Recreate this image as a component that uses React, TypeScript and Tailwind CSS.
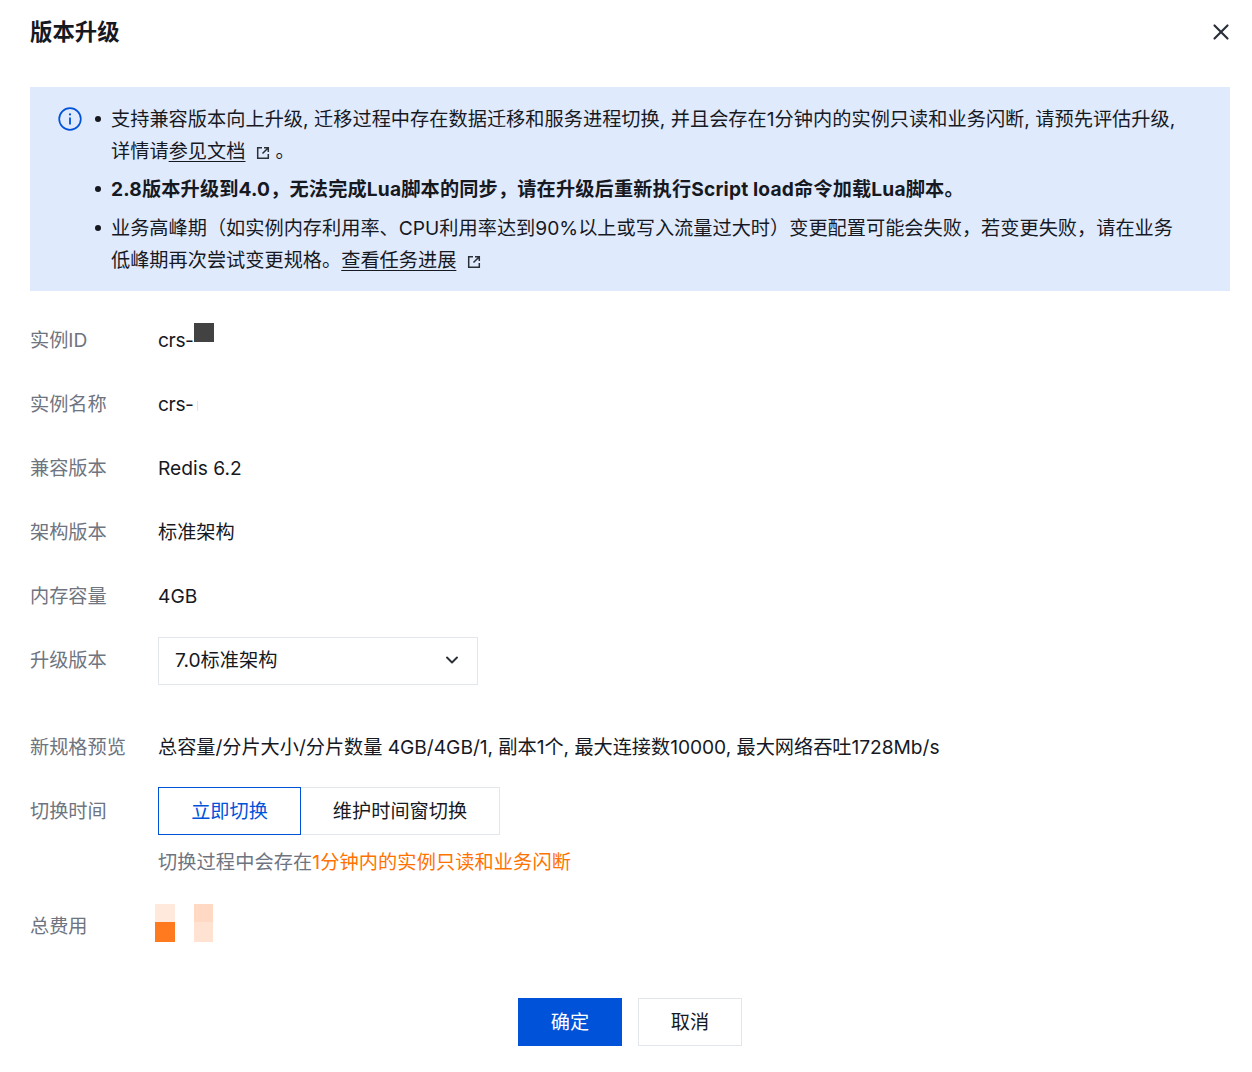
import { X, ChevronDown } from "lucide-react";

const font = "font-['Inter','Noto_Sans_CJK_SC',sans-serif]";

function ExternalIcon() {
  return (
    <svg width="16" height="16" viewBox="0 0 16 16" fill="none" className="inline-block align-[-3px] ml-[10px]" aria-hidden="true">
      <path d="M7 2.7H2.7v10.6h10.6V9" stroke="#2b3038" strokeWidth="1.5" />
      <path d="M9 2.7h4.3V7M13.3 2.7 7.5 8.5" stroke="#2b3038" strokeWidth="1.5" />
    </svg>
  );
}

function Bullet() {
  return (
    <span className="w-[17px] shrink-0 flex pt-[13px] pl-[1px]">
      <span className="w-[6px] h-[6px] rounded-full bg-[#16191f]" />
    </span>
  );
}

function Row({ label, className, children }: { label: string; className?: string; children: React.ReactNode }) {
  return (
    <div className={`flex items-center ${className ?? ""}`}>
      <div className="w-[128px] shrink-0 text-[#6e7480]">{label}</div>
      <div className="flex-1 min-w-0">{children}</div>
    </div>
  );
}

export default function App() {
  return (
    <div className={`${font} w-[1252px] h-[1072px] bg-white pl-[30px] pr-[22px] text-[19.2px] leading-[32px] text-[#16191f] overflow-hidden`}>
      <div className="flex items-center justify-between h-[32px] pt-0 mt-[16px]">
        <h1 className="text-[22.4px] font-bold">版本升级</h1>
        <X size={26} strokeWidth={2} className="text-[#2b3038] -mr-[4px]" aria-label="关闭" />
      </div>

      <div className="mt-[39px] bg-[#e0eafd] h-[204px] pl-[28px] pr-[40px] pt-[16px] flex items-start">
        <svg width="24" height="24" viewBox="0 0 24 24" fill="none" className="shrink-0 mt-[4px]" aria-hidden="true">
          <circle cx="12" cy="12" r="10.8" stroke="#0052d9" strokeWidth="1.7" />
          <circle cx="12" cy="7.4" r="1.1" fill="#0052d9" />
          <path d="M12 10.4v7.2" stroke="#0052d9" strokeWidth="1.8" />
        </svg>
        <ul className="ml-[12px] flex-1 flex flex-col">
          <li className="flex">
            <Bullet />
            <p className="tracking-[0.02px]">
              <span className="block whitespace-nowrap">支持兼容版本向上升级, 迁移过程中存在数据迁移和服务进程切换, 并且会存在1分钟内的实例只读和业务闪断, 请预先评估升级,</span>
              <span className="block whitespace-nowrap">
                详情请<a className="underline underline-offset-[3px]">参见文档</a>
                <ExternalIcon />
                <span className="ml-[4px]">。</span>
              </span>
            </p>
          </li>
          <li className="flex mt-[6px]">
            <Bullet />
            <p className="font-bold tracking-[0.15px]">2.8版本升级到4.0，无法完成Lua脚本的同步，请在升级后重新执行Script load命令加载Lua脚本。</p>
          </li>
          <li className="flex mt-[7px]">
            <Bullet />
            <p>
              <span className="block whitespace-nowrap">业务高峰期（如实例内存利用率、CPU利用率达到90%以上或写入流量过大时）变更配置可能会失败，若变更失败，请在业务</span>
              <span className="block whitespace-nowrap">
                低峰期再次尝试变更规格。<a className="underline underline-offset-[3px]">查看任务进展</a>
                <ExternalIcon />
              </span>
            </p>
          </li>
        </ul>
      </div>

      <div className="mt-[25px]">
        <Row label="实例ID" className="h-[48px] mb-[16px]">
          <span className="relative tracking-[-0.4px]">
            crs-
            <span className="absolute left-full top-[-5px] w-[20px] h-[19px] bg-[#424242]" />
          </span>
        </Row>
        <Row label="实例名称" className="h-[48px] mb-[16px]">
          <span className="relative tracking-[-0.4px]">
            crs-
            <span className="absolute left-[calc(100%+3px)] top-[9px] w-[1px] h-[10px] bg-[#e4e4e4]" />
          </span>
        </Row>
        <Row label="兼容版本" className="h-[48px] mb-[16px]">Redis 6.2</Row>
        <Row label="架构版本" className="h-[48px] mb-[16px]">标准架构</Row>
        <Row label="内存容量" className="h-[48px] mb-[16px]">4GB</Row>
        <Row label="升级版本" className="h-[48px] mb-[39px]">
          <div className="w-[320px] h-[48px] mt-[2px] border border-[#e3e6eb] flex items-center justify-between pl-[16px] pr-[15px]">
            <span className="-mt-[2px]">7.0标准架构</span>
            <ChevronDown size={20} strokeWidth={2.3} className="text-[#2b3038] -mt-[2px]" />
          </div>
        </Row>
        <Row label="新规格预览" className="h-[48px] mb-[16px]">
          <span className="tracking-[-0.04px]">总容量/分片大小/分片数量 4GB/4GB/1, 副本1个, 最大连接数10000, 最大网络吞吐1728Mb/s</span>
        </Row>
        <Row label="切换时间" className="h-[48px]">
          <div className="flex h-[48px]">
            <button type="button" className="w-[143px] border border-[#0052d9] text-[#0052d9]">立即切换</button>
            <button type="button" className="w-[199px] border border-l-0 border-[#e3e6eb]">维护时间窗切换</button>
          </div>
        </Row>
        <p className="ml-[128px] mt-[11px] text-[#6e7480] tracking-[0.1px]">
          切换过程中会存在<span className="text-[#ff7200]">1分钟内的实例只读和业务闪断</span>
        </p>
        <Row label="总费用" className="h-[48px] mt-[24px]">
          <div className="flex gap-[19px] -ml-[3px] mt-[-6px]">
            <div className="w-[20px]">
              <div className="h-[18px] bg-[#ffe9dd]" />
              <div className="h-[20px] bg-[#ff7a1f]" />
            </div>
            <div className="w-[19px]">
              <div className="h-[18px] bg-[#ffd9c4]" />
              <div className="h-[20px] bg-[#ffe2d2]" />
            </div>
          </div>
        </Row>
      </div>

      <div className="flex justify-center gap-[16px] mt-[48px]">
        <button type="button" className="w-[104px] h-[48px] bg-[#0052d9] text-white">确定</button>
        <button type="button" className="w-[104px] h-[48px] border border-[#e3e6eb]">取消</button>
      </div>
    </div>
  );
}
